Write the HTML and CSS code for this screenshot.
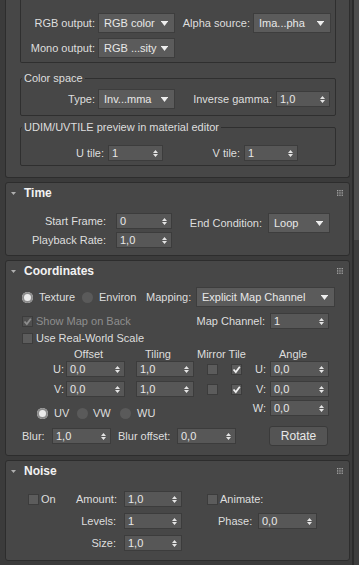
FILE: index.html
```html
<!DOCTYPE html>
<html lang="en">
<head>
  <meta charset="UTF-8">
  <title>Bitmap Parameters</title>
  <link rel="stylesheet" href="styles.css">
</head>
<body>

<svg class="defs" width="0" height="0">
  <symbol id="spinArr" viewBox="0 0 5 9"><path d="M0 4L2.5 1L5 4ZM0 5L2.5 8L5 5Z"/></symbol>
  <symbol id="dropArr" viewBox="0 0 7 5"><path d="M0 0H7V1H0ZM0.5 1H6.5L3.5 5Z"/></symbol>
  <symbol id="headArr" viewBox="0 0 5 3"><path d="M0 0H5L2.5 3Z"/></symbol>
  <symbol id="tick" viewBox="0 0 9 9"><path d="M1.5 4.5L3.8 7L7.8 1.8" fill="none" stroke-width="1.8"/></symbol>
  <symbol id="grip" viewBox="0 0 6 6">
    <rect x="0" y="0" width="1.3" height="1.3"/><rect x="2.3" y="0" width="1.3" height="1.3"/><rect x="4.6" y="0" width="1.3" height="1.3"/>
    <rect x="0" y="2.3" width="1.3" height="1.3"/><rect x="2.3" y="2.3" width="1.3" height="1.3"/><rect x="4.6" y="2.3" width="1.3" height="1.3"/>
    <rect x="0" y="4.6" width="1.3" height="1.3"/><rect x="2.3" y="4.6" width="1.3" height="1.3"/><rect x="4.6" y="4.6" width="1.3" height="1.3"/>
  </symbol>
</svg>

<div class="screen">
  <div class="stack">

    <!-- output (continued from above) -->
    <section class="rollout cont">
      <div class="group g1">
        <div class="row r20">
          <span class="lbl w74">RGB output:</span>
          <div class="drop ml3 w77">RGB color <svg class="darr"><use href="#dropArr"/></svg></div>
          <span class="lbl w75">Alpha source:</span>
          <div class="drop ml3 w78">Ima...pha <svg class="darr"><use href="#dropArr"/></svg></div>
        </div>
        <div class="row r20 mt5">
          <span class="lbl w74">Mono output:</span>
          <div class="drop ml3 w77">RGB ...sity <svg class="darr"><use href="#dropArr"/></svg></div>
        </div>
      </div>

      <div class="group g2">
        <div class="legend">Color space</div>
        <div class="row r20 mt4">
          <span class="lbl w74">Type:</span>
          <div class="drop ml3 w77">Inv...mma <svg class="darr"><use href="#dropArr"/></svg></div>
          <span class="lbl w97">Inverse gamma:</span>
          <div class="spin ml4 w54">1,0 <svg class="sarr"><use href="#spinArr"/></svg></div>
        </div>
      </div>

      <div class="group g3">
        <div class="legend">UDIM/UVTILE preview in material editor</div>
        <div class="row mt11">
          <span class="lbl w83">U tile:</span>
          <div class="spin ml4 w55">1 <svg class="sarr"><use href="#spinArr"/></svg></div>
          <span class="lbl w77">V tile:</span>
          <div class="spin ml4 w54">1 <svg class="sarr"><use href="#spinArr"/></svg></div>
        </div>
      </div>
    </section>

    <!-- Time -->
    <section class="rollout time">
      <div class="head">
        <svg class="harr"><use href="#headArr"/></svg>
        <span class="title">Time</span>
        <svg class="grip"><use href="#grip"/></svg>
      </div>
      <div class="time-body">
        <div class="col">
          <div class="row">
            <span class="lbl w100">Start Frame:</span>
            <div class="spin ml10 w56">0 <svg class="sarr"><use href="#spinArr"/></svg></div>
          </div>
          <div class="row mt3">
            <span class="lbl w100">Playback Rate:</span>
            <div class="spin ml10 w56">1,0 <svg class="sarr"><use href="#spinArr"/></svg></div>
          </div>
        </div>
        <div class="row r20">
          <span class="lbl w90">End Condition:</span>
          <div class="drop ml6 w62">Loop <svg class="darr"><use href="#dropArr"/></svg></div>
        </div>
      </div>
    </section>

    <!-- Coordinates -->
    <section class="rollout coords">
      <div class="head">
        <svg class="harr"><use href="#headArr"/></svg>
        <span class="title">Coordinates</span>
        <svg class="grip"><use href="#grip"/></svg>
      </div>

      <div class="row r20 mt6">
        <span class="rad on ml16"></span>
        <span class="txt ml6 w43">Texture</span>
        <span class="rad"></span>
        <span class="txt ml6 w47">Environ</span>
        <span class="txt w50">Mapping:</span>
        <div class="drop w139">Explicit Map Channel <svg class="darr"><use href="#dropArr"/></svg></div>
      </div>

      <div class="row mt6">
        <div class="row w186">
          <span class="cb dis ml16"><svg class="tk"><use href="#tick"/></svg></span>
          <span class="txt dim ml3">Show Map on Back</span>
        </div>
        <span class="lbl w73">Map Channel:</span>
        <div class="spin ml5 w59">1 <svg class="sarr"><use href="#spinArr"/></svg></div>
      </div>

      <div class="row r14 mt2">
        <span class="cb ml16"></span>
        <span class="txt ml3">Use Real-World Scale</span>
      </div>

      <div class="table mt2">
        <div class="tleft">
          <div class="row r14">
            <span class="txt ml68 w71">Offset</span>
            <span class="txt w52">Tiling</span>
            <span class="txt">Mirror Tile</span>
          </div>
          <div class="row">
            <span class="lbl w58">U:</span>
            <div class="spin ml2 w59">0,0 <svg class="sarr"><use href="#spinArr"/></svg></div>
            <div class="spin ml11 w58">1,0 <svg class="sarr"><use href="#spinArr"/></svg></div>
            <span class="cb ml13"></span>
            <span class="cb ml13"><svg class="tk"><use href="#tick"/></svg></span>
          </div>
          <div class="row mt4">
            <span class="lbl w58">V:</span>
            <div class="spin ml2 w59">0,0 <svg class="sarr"><use href="#spinArr"/></svg></div>
            <div class="spin ml11 w58">1,0 <svg class="sarr"><use href="#spinArr"/></svg></div>
            <span class="cb ml13"></span>
            <span class="cb ml13"><svg class="tk"><use href="#tick"/></svg></span>
          </div>
          <div class="row r14 mt9">
            <span class="rad on ml31"></span>
            <span class="txt ml6 w23">UV</span>
            <span class="rad"></span>
            <span class="txt ml5 w27">VW</span>
            <span class="rad"></span>
            <span class="txt ml6">WU</span>
          </div>
        </div>
        <div class="tright">
          <div class="row r14">
            <span class="txt ml34">Angle</span>
          </div>
          <div class="row">
            <span class="lbl w21">U:</span>
            <div class="spin ml4 w59">0,0 <svg class="sarr"><use href="#spinArr"/></svg></div>
          </div>
          <div class="row mt4">
            <span class="lbl w21">V:</span>
            <div class="spin ml4 w59">0,0 <svg class="sarr"><use href="#spinArr"/></svg></div>
          </div>
          <div class="row mt3">
            <span class="lbl w21">W:</span>
            <div class="spin ml4 w59">0,0 <svg class="sarr"><use href="#spinArr"/></svg></div>
          </div>
        </div>
      </div>

      <div class="row r20 mt6">
        <span class="txt ml16 w30">Blur:</span>
        <div class="spin w59">1,0 <svg class="sarr"><use href="#spinArr"/></svg></div>
        <span class="txt ml7 w59">Blur offset:</span>
        <div class="spin w59">0,0 <svg class="sarr"><use href="#spinArr"/></svg></div>
        <button class="btn ml33">Rotate</button>
      </div>
    </section>

    <!-- Noise -->
    <section class="rollout noise">
      <div class="head">
        <svg class="harr"><use href="#headArr"/></svg>
        <span class="title">Noise</span>
        <svg class="grip"><use href="#grip"/></svg>
      </div>
      <div class="noise-grid">
        <div class="row">
          <span class="cb ml22"></span>
          <span class="txt ml2">On</span>
        </div>
        <span class="lbl">Amount:</span>
        <div class="spin ml8 w58">1,0 <svg class="sarr"><use href="#spinArr"/></svg></div>
        <div class="row">
          <span class="cb ml25"></span>
          <span class="txt ml2">Animate:</span>
        </div>

        <span></span>
        <span class="lbl">Levels:</span>
        <div class="spin ml8 w58">1 <svg class="sarr"><use href="#spinArr"/></svg></div>
        <div class="row">
          <span class="txt ml36 w40">Phase:</span>
          <div class="spin w59">0,0 <svg class="sarr"><use href="#spinArr"/></svg></div>
        </div>

        <span></span>
        <span class="lbl">Size:</span>
        <div class="spin ml8 w58">1,0 <svg class="sarr"><use href="#spinArr"/></svg></div>
        <span></span>
      </div>
    </section>

  </div>
  <div class="scrollbar"><div class="thumb"></div></div>
</div>

</body>
</html>
```

FILE: styles.css
```css
* {
  box-sizing: border-box;
}

body {
  margin: 0;
  background-color: #3b3b3b;
  font-family: 'Liberation Sans', Arial, sans-serif;
  font-size: 11px;
  color: #dedede;
}

.defs {
  position: absolute;
}

.screen {
  display: flex;
  width: 359px;
  height: 565px;
  overflow: hidden;
}

.stack {
  width: 352px;
  padding: 0 2px 0 5px;
  display: flex;
  flex-direction: column;
  gap: 4px;
}

.scrollbar {
  width: 7px;
  border-left: 2px solid #2b2b2b;
  background: #3d3d3d;
}

.thumb {
  height: 240px;
  background: #4d4d4d;
}

/* rollouts */
.rollout {
  flex: none;
  background: #474747;
  border: 1px solid #2d2d2d;
  border-radius: 3px;
}

.rollout.cont {
  height: 178px;
  border-top: 0;
  border-radius: 0 0 3px 3px;
}

.rollout.time { height: 74px; }
.rollout.coords { height: 196px; }
.rollout.noise { height: 101px; }

.head {
  height: 20px;
  display: flex;
  align-items: center;
  padding: 0 6px 0 5px;
}

.harr {
  width: 5px;
  height: 3px;
  fill: #b0b0b0;
  margin-right: 8px;
}

.title {
  flex: 1;
  font-size: 12px;
  font-weight: bold;
  color: #f2f2f2;
}

.grip {
  width: 6px;
  height: 6px;
  fill: #a8a8a8;
}

/* group boxes */
.group {
  margin: 0 13px 0 14px;
  border: 1px solid #2f2f2f;
  border-radius: 2px;
}

.g1 {
  border-top: 0;
  border-radius: 0 0 2px 2px;
  padding: 13px 0 4px;
}

.g2 {
  margin-top: 15px;
  padding-bottom: 6px;
}

.g3 {
  margin-top: 11px;
  padding-bottom: 4px;
}

.legend {
  width: max-content;
  margin: -7px 0 0 1px;
  padding: 0 2px;
  line-height: 13px;
  background: #474747;
}

/* rows */
.row {
  display: flex;
  align-items: center;
}

.r20 { height: 20px; }
.r14 { height: 14px; }

.lbl {
  flex: none;
  text-align: right;
  white-space: nowrap;
}

.txt {
  flex: none;
  white-space: nowrap;
}

.dim { color: #8e8e8e; }

/* controls */
.drop {
  flex: none;
  height: 20px;
  display: flex;
  align-items: center;
  justify-content: space-between;
  padding: 0 6px 0 5px;
  background: #5b5b5b;
  border: 1px solid #3d3d3d;
  color: #e8e8e8;
}

.darr {
  width: 7px;
  height: 5px;
  fill: #eeeeee;
}

.spin {
  flex: none;
  height: 16px;
  display: flex;
  align-items: center;
  justify-content: space-between;
  padding: 0 4px 0 3px;
  background: #575757;
  border: 1px solid #3c3c3c;
  color: #e8e8e8;
}

.sarr {
  width: 5px;
  height: 9px;
  fill: #e4e4e4;
}

.cb {
  flex: none;
  width: 11px;
  height: 11px;
  display: flex;
  align-items: center;
  justify-content: center;
  background: #5c5c5c;
  border: 1px solid #3c3c3c;
}

.cb.dis { background: #505050; }

.tk {
  width: 9px;
  height: 9px;
  stroke: #f0f0f0;
}

.cb.dis .tk { stroke: #8e8e8e; }

.rad {
  flex: none;
  width: 11px;
  height: 11px;
  border-radius: 50%;
  background: #5a5a5a;
}

.rad.on {
  background: #ececec;
  box-shadow: inset 0 0 0 2px #8c8c8c;
}

.btn {
  width: 59px;
  height: 20px;
  padding: 0;
  background: #545454;
  border: 1px solid #3a3a3a;
  border-radius: 3px;
  font: inherit;
  font-size: 12px;
  color: #e8e8e8;
}

/* time */
.time-body {
  display: flex;
  margin-top: 10px;
}

/* coordinates table */
.table {
  display: flex;
}

.tleft { width: 239px; }

/* noise */
.noise-grid {
  display: grid;
  grid-template-columns: 70px 40px 66px auto;
  grid-template-rows: 16px 16px 16px;
  row-gap: 6px;
  align-items: center;
  margin-top: 10px;
}

/* spacing helpers */
.mt2 { margin-top: 2px; }
.mt3 { margin-top: 3px; }
.mt4 { margin-top: 4px; }
.mt5 { margin-top: 5px; }
.mt6 { margin-top: 6px; }
.mt9 { margin-top: 9px; }
.mt11 { margin-top: 11px; }

.ml2 { margin-left: 2px; }
.ml3 { margin-left: 3px; }
.ml4 { margin-left: 4px; }
.ml5 { margin-left: 5px; }
.ml6 { margin-left: 6px; }
.ml7 { margin-left: 7px; }
.ml8 { margin-left: 8px; }
.ml10 { margin-left: 10px; }
.ml11 { margin-left: 11px; }
.ml13 { margin-left: 13px; }
.ml16 { margin-left: 16px; }
.ml22 { margin-left: 22px; }
.ml25 { margin-left: 25px; }
.ml31 { margin-left: 31px; }
.ml33 { margin-left: 33px; }
.ml34 { margin-left: 34px; }
.ml36 { margin-left: 36px; }
.ml68 { margin-left: 68px; }

.w21 { width: 21px; }
.w23 { width: 23px; }
.w27 { width: 27px; }
.w30 { width: 30px; }
.w40 { width: 40px; }
.w43 { width: 43px; }
.w47 { width: 47px; }
.w50 { width: 50px; }
.w52 { width: 52px; }
.w54 { width: 54px; }
.w55 { width: 55px; }
.w56 { width: 56px; }
.w58 { width: 58px; }
.w59 { width: 59px; }
.w62 { width: 62px; }
.w71 { width: 71px; }
.w73 { width: 73px; }
.w74 { width: 74px; }
.w75 { width: 75px; }
.w77 { width: 77px; }
.w78 { width: 78px; }
.w83 { width: 83px; }
.w90 { width: 90px; }
.w97 { width: 97px; }
.w100 { width: 100px; }
.w139 { width: 139px; }
.w186 { width: 186px; }
```
